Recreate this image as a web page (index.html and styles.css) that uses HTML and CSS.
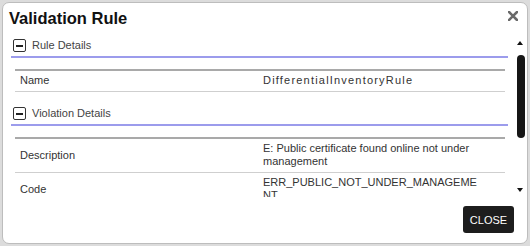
FILE: index.html
```html
<!DOCTYPE html>
<html lang="en">
<head>
  <meta charset="UTF-8" />
  <meta name="viewport" content="width=device-width, initial-scale=1" />
  <title>Validation Rule</title>
  <link rel="stylesheet" href="styles.css">
</head>
<body>

<div class="dialog">
  <div class="dialog-head">
    <h2 class="dialog-title">Validation Rule</h2>
    <button class="dialog-x" title="Close">
      <svg width="10" height="10" viewBox="0 0 10 10"><path d="M1 1 L9 9 M9 1 L1 9" stroke="#6a6a6a" stroke-width="2.6" stroke-linecap="square"/></svg>
    </button>
  </div>

  <div class="dialog-body">
    <div class="dialog-scroll">
      <div class="section">
        <div class="section-head"><span class="toggle"></span>Rule Details</div>
        <table class="props">
          <tr>
            <td>Name</td>
            <td class="wide">DifferentialInventoryRule</td>
          </tr>
        </table>
      </div>

      <div class="section">
        <div class="section-head"><span class="toggle"></span>Violation Details</div>
        <table class="props">
          <tr>
            <td>Description</td>
            <td>E: Public certificate found online not under management</td>
          </tr>
          <tr>
            <td>Code</td>
            <td>ERR_PUBLIC_NOT_UNDER_MANAGEMENT</td>
          </tr>
        </table>
      </div>
    </div>

    <!-- scrollbar drawn by hand, the headless browser hides real ones -->
    <div class="scrollbar">
      <span class="sb-arrow up"></span>
      <div class="sb-track"><div class="sb-thumb"></div></div>
      <span class="sb-arrow down"></span>
    </div>
  </div>

  <div class="dialog-foot">
    <button class="btn-close">CLOSE</button>
  </div>
</div>

</body>
</html>
```

FILE: styles.css
```css
html, body {
  margin: 0;
}
body {
  padding: 2px;
  background: #dcdcdc;
  font-family: "Liberation Sans", Arial, sans-serif;
  font-size: 11px;
  color: #333;
}
.dialog {
  width: 526px;
  height: 242px;
  box-sizing: border-box;
  background: #fff;
  border: 1px solid #bdbdbd;
  border-radius: 7px;
  display: flex;
  flex-direction: column;
}
.dialog-head {
  display: flex;
  justify-content: space-between;
  align-items: flex-start;
  padding: 6px 9px 0 6px;
}
.dialog-title {
  margin: 0;
  font-size: 16.5px;
  line-height: 19px;
  font-weight: bold;
  color: #111;
}
.dialog-x {
  border: none;
  background: none;
  padding: 0;
  margin-top: 2px;
  width: 10px;
  height: 10px;
  display: flex;
}
.dialog-body {
  margin-top: 7px;
  height: 162px;
  flex: none;
  display: flex;
}
.dialog-scroll {
  flex: 1;
  min-width: 0;
  overflow: hidden;
  padding: 0 4px 0 8px;
}
.scrollbar {
  width: 15px;
  flex: none;
  display: flex;
  flex-direction: column;
}
.sb-arrow {
  height: 15px;
  display: flex;
  align-items: center;
  padding-left: 5px;
}
.sb-arrow::before {
  content: "";
  border-left: 3.5px solid transparent;
  border-right: 3.5px solid transparent;
}
.sb-arrow.up::before {
  border-bottom: 4px solid #111;
}
.sb-arrow.down::before {
  border-top: 4px solid #111;
}
.sb-track {
  flex: 1;
  padding: 5px 2px 0 5px;
}
.sb-thumb {
  height: 83px;
  background: #161616;
  border-radius: 4px;
}
.section-head {
  display: flex;
  align-items: center;
  gap: 6px;
  padding: 4px 0 4px 2px;
  line-height: 13px;
  color: #444;
  border-bottom: 2px solid #9c9cec;
}
.toggle {
  width: 13px;
  height: 13px;
  box-sizing: border-box;
  border: 1.6px solid #333;
  border-radius: 2px;
  display: flex;
  align-items: center;
  justify-content: center;
}
.toggle::before {
  content: "";
  width: 7px;
  height: 2px;
  background: #222;
}
.props {
  width: calc(100% - 7px);
  margin: 11px 3px 11px 4px;
  border-collapse: separate;
  border-spacing: 0;
  border-top: 2px solid #a9a9a9;
  table-layout: fixed;
}
.props td {
  padding: 3px 25px 4px 5px;
  line-height: 13px;
  border-bottom: 1px solid #cfcfcf;
  vertical-align: middle;
  overflow-wrap: anywhere;
}
.props td:first-child {
  width: 233px;
  padding-right: 5px;
}
.props .wide {
  letter-spacing: 1.2px;
}
.dialog-foot {
  display: flex;
  justify-content: flex-end;
  padding: 9px 13px 10px;
}
.btn-close {
  height: 27px;
  width: 51px;
  padding: 0;
  border: none;
  border-radius: 3px;
  background: #1d1d1d;
  color: #fff;
  font-family: "Liberation Sans", Arial, sans-serif;
  font-size: 11px;
}
```
